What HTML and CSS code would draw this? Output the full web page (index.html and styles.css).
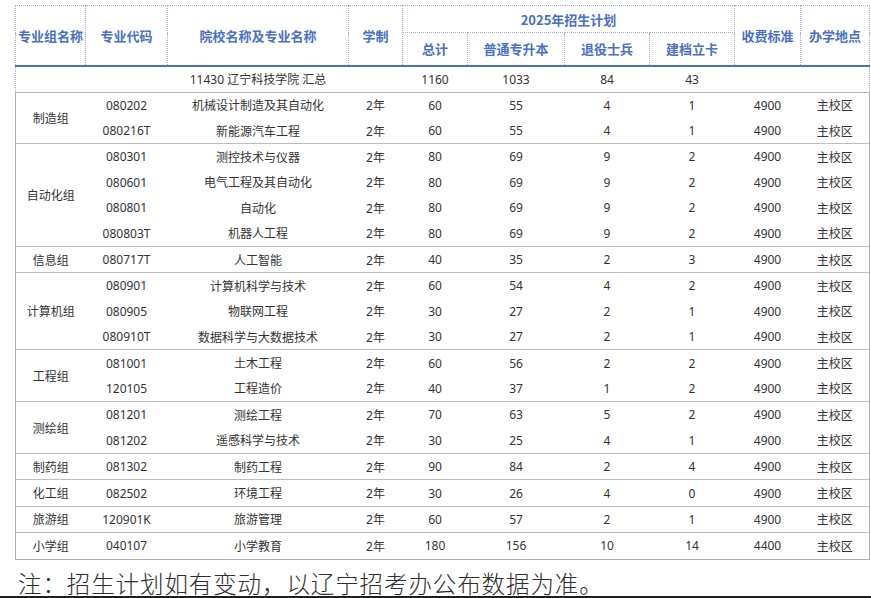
FILE: index.html
```html
<!DOCTYPE html>
<html lang="zh-CN">
<head>
<meta charset="utf-8">
<title>2025年招生计划</title>
<link rel="stylesheet" href="styles.css">
</head>
<body>
<div class="page">
<table class="plan">
  <colgroup>
    <col class="c1"><col class="c2"><col class="c3"><col class="c4"><col class="c5">
    <col class="c6"><col class="c7"><col class="c8"><col class="c9"><col class="c10">
  </colgroup>
  <thead>
    <tr class="h1">
      <th rowspan="2">专业组名称</th>
      <th rowspan="2">专业代码</th>
      <th rowspan="2">院校名称及专业名称</th>
      <th rowspan="2">学制</th>
      <th colspan="4">2025年招生计划</th>
      <th rowspan="2">收费标准</th>
      <th rowspan="2">办学地点</th>
    </tr>
    <tr class="h2">
      <th>总计</th>
      <th>普通专升本</th>
      <th>退役士兵</th>
      <th>建档立卡</th>
    </tr>
  </thead>
  <tbody>
    <tr class="sum">
      <td class="edge-l"></td><td></td><td>11430 辽宁科技学院 汇总</td><td></td>
      <td>1160</td><td>1033</td><td>84</td><td>43</td><td></td><td class="edge-r"></td>
    </tr>
    <tr class="g"><td class="grp" rowspan="2">制造组</td><td>080202</td><td>机械设计制造及其自动化</td><td>2年</td><td>60</td><td>55</td><td>4</td><td>1</td><td>4900</td><td class="loc">主校区</td></tr>
    <tr><td>080216T</td><td>新能源汽车工程</td><td>2年</td><td>60</td><td>55</td><td>4</td><td>1</td><td>4900</td><td class="loc">主校区</td></tr>
    <tr class="g"><td class="grp" rowspan="4">自动化组</td><td>080301</td><td>测控技术与仪器</td><td>2年</td><td>80</td><td>69</td><td>9</td><td>2</td><td>4900</td><td class="loc">主校区</td></tr>
    <tr><td>080601</td><td>电气工程及其自动化</td><td>2年</td><td>80</td><td>69</td><td>9</td><td>2</td><td>4900</td><td class="loc">主校区</td></tr>
    <tr><td>080801</td><td>自动化</td><td>2年</td><td>80</td><td>69</td><td>9</td><td>2</td><td>4900</td><td class="loc">主校区</td></tr>
    <tr><td>080803T</td><td>机器人工程</td><td>2年</td><td>80</td><td>69</td><td>9</td><td>2</td><td>4900</td><td class="loc">主校区</td></tr>
    <tr class="g"><td class="grp">信息组</td><td>080717T</td><td>人工智能</td><td>2年</td><td>40</td><td>35</td><td>2</td><td>3</td><td>4900</td><td class="loc">主校区</td></tr>
    <tr class="g"><td class="grp" rowspan="3">计算机组</td><td>080901</td><td>计算机科学与技术</td><td>2年</td><td>60</td><td>54</td><td>4</td><td>2</td><td>4900</td><td class="loc">主校区</td></tr>
    <tr><td>080905</td><td>物联网工程</td><td>2年</td><td>30</td><td>27</td><td>2</td><td>1</td><td>4900</td><td class="loc">主校区</td></tr>
    <tr><td>080910T</td><td>数据科学与大数据技术</td><td>2年</td><td>30</td><td>27</td><td>2</td><td>1</td><td>4900</td><td class="loc">主校区</td></tr>
    <tr class="g"><td class="grp" rowspan="2">工程组</td><td>081001</td><td>土木工程</td><td>2年</td><td>60</td><td>56</td><td>2</td><td>2</td><td>4900</td><td class="loc">主校区</td></tr>
    <tr><td>120105</td><td>工程造价</td><td>2年</td><td>40</td><td>37</td><td>1</td><td>2</td><td>4900</td><td class="loc">主校区</td></tr>
    <tr class="g"><td class="grp" rowspan="2">测绘组</td><td>081201</td><td>测绘工程</td><td>2年</td><td>70</td><td>63</td><td>5</td><td>2</td><td>4900</td><td class="loc">主校区</td></tr>
    <tr><td>081202</td><td>遥感科学与技术</td><td>2年</td><td>30</td><td>25</td><td>4</td><td>1</td><td>4900</td><td class="loc">主校区</td></tr>
    <tr class="g"><td class="grp">制药组</td><td>081302</td><td>制药工程</td><td>2年</td><td>90</td><td>84</td><td>2</td><td>4</td><td>4900</td><td class="loc">主校区</td></tr>
    <tr class="g"><td class="grp">化工组</td><td>082502</td><td>环境工程</td><td>2年</td><td>30</td><td>26</td><td>4</td><td>0</td><td>4900</td><td class="loc">主校区</td></tr>
    <tr class="g"><td class="grp">旅游组</td><td>120901K</td><td>旅游管理</td><td>2年</td><td>60</td><td>57</td><td>2</td><td>1</td><td>4900</td><td class="loc">主校区</td></tr>
    <tr class="g last"><td class="grp">小学组</td><td>040107</td><td>小学教育</td><td>2年</td><td>180</td><td>156</td><td>10</td><td>14</td><td>4400</td><td class="loc">主校区</td></tr>
  </tbody>
</table>
<p class="note">注：招生计划如有变动，以辽宁招考办公布数据为准。</p>
</div>
</body>
</html>
```

FILE: styles.css
```css
html, body {
  margin: 0;
  padding: 0;
  background: #ffffff;
}

.page {
  width: 871px;
  height: 598px;
  padding-top: 5px;
  box-sizing: border-box;
  border-bottom: 2px solid #1e1e1e;
}

.plan {
  margin-left: 15px;
  width: 854px;
  border-collapse: collapse;
  table-layout: fixed;
  font-family: "Noto Sans", "Noto Sans CJK SC", sans-serif;
  font-size: 12px;
  color: #333333;
}

.c1 { width: 70px; }
.c2 { width: 82px; }
.c3 { width: 181px; }
.c4 { width: 54px; }
.c5 { width: 65px; }
.c6 { width: 97px; }
.c7 { width: 85px; }
.c8 { width: 85px; }
.c9 { width: 66px; }
.c10 { width: 69px; }

.plan th {
  color: #4a70c2;
  font-family: "Noto Sans CJK SC", sans-serif;
  font-weight: 700;
  font-size: 13px;
  border: 1px dotted #a4acd8;
  padding: 0;
  text-align: center;
  vertical-align: middle;
  white-space: nowrap;
}

.plan thead tr.h1 { height: 27px; }
.plan thead tr.h2 { height: 33px; }
.plan thead tr.h2 th { border-bottom: 2px solid #4a70c2; }
.plan thead tr.h1 th[rowspan] { border-bottom: 2px solid #4a70c2; }

.plan td {
  padding: 0;
  height: 25.4px;
  text-align: center;
  vertical-align: middle;
  white-space: nowrap;
}

.plan tr.sum td {
  height: 25px;
  border-bottom: 1px solid #b8b8b8;
}
.plan td.edge-l { border-left: 1px dotted #a4acd8; }
.plan td.edge-r { border-right: 1px dotted #a4acd8; }

.plan td.grp { border-left: 1px solid #b0b0b0; }
.plan td.loc { border-right: 1px solid #b0b0b0; }
.plan tr.g td { border-top: 1px solid #bdbdbd; }
.plan tr.last td { border-bottom: 1px solid #b0b0b0; }

.note {
  margin: 11px 0 0 18px;
  font-family: "Noto Sans CJK SC", sans-serif;
  font-weight: 300;
  font-size: 23.5px;
  line-height: 24px;
  color: #2e2e2e;
  letter-spacing: 0.9px;
  white-space: nowrap;
}
```
